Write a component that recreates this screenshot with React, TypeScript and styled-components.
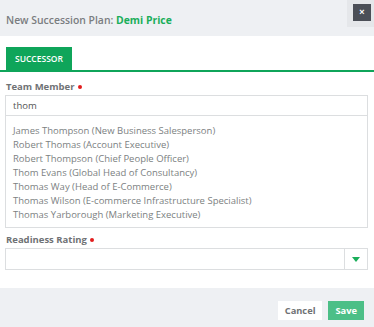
import React, {useState} from "react";
import styled, {createGlobalStyle} from "styled-components";

const GlobalStyle = createGlobalStyle`
    html, body {
        margin: 0;
        padding: 0;
        background: #fff;
        font-family: "Open Sans", "Liberation Sans", sans-serif;
    }
    * {
        box-sizing: border-box;
    }
`;

const Modal = styled.div`
    width: 374px;
    height: 327px;
    display: flex;
    flex-direction: column;
    background: #fff;
`;

const Header = styled.header`
    height: 36px;
    background: #eef0f3;
    display: flex;
    align-items: flex-start;
    justify-content: space-between;
    padding-left: 6px;
`;

const Title = styled.h1`
    margin: 13px 0 0;
    font-size: 10.4px;
    font-weight: 600;
    color: #7a7d80;
    line-height: 14px;
`;

const Highlight = styled.span`
    color: #1aae5a;
    font-weight: 700;
`;

const CloseArea = styled.div`
    width: 27px;
    height: 27px;
    background: #e5e7ea;
    display: flex;
    align-items: flex-start;
    justify-content: flex-start;
    padding: 4px 0 0 6px;
`;

const CloseButton = styled.button`
    width: 18px;
    height: 17px;
    border: none;
    padding: 0;
    background: #4b4f57;
    color: #fff;
    font-size: 9px;
    font-weight: 700;
    line-height: 17px;
    cursor: pointer;
`;

const Body = styled.main`
    flex: 1;
    padding-top: 11px;
`;

const Tabs = styled.div`
    display: flex;
    padding-left: 6px;
    border-bottom: 2px solid #0fa55a;
`;

const Tab = styled.div`
    width: 66px;
    height: 23px;
    background: #0fa55a;
    color: #fff;
    font-size: 8.5px;
    font-weight: 600;
    display: flex;
    align-items: center;
    justify-content: center;
`;

const Form = styled.div`
    padding: 8px 6px 0 5px;
    display: flex;
    flex-direction: column;
`;

const Label = styled.label`
    font-size: 9.5px;
    font-weight: 700;
    color: #6f7275;
    line-height: 13px;
    margin-left: 1px;
    margin-bottom: 2px;
    display: flex;
    align-items: center;
    gap: 3px;
`;

const Required = styled.span`
    width: 4px;
    height: 4px;
    border-radius: 50%;
    background: #e21d1d;
    margin-top: 1px;
`;

const Input = styled.input`
    height: 21px;
    width: 100%;
    border: 1px solid #dcdee0;
    padding: 0 7px;
    font-family: inherit;
    font-size: 9.5px;
    color: #555;
    outline: none;
`;

const Suggestions = styled.ul`
    list-style: none;
    margin: 0 0 5px;
    padding: 8px 7px 5px;
    border: 1px solid #dcdee0;
    border-top: none;
`;

const Suggestion = styled.li`
    font-size: 9.5px;
    line-height: 14px;
    color: #7c7f82;
    cursor: pointer;
`;

const Select = styled.div`
    height: 22px;
    display: flex;
    border: 1px solid #dcdee0;
`;

const SelectValue = styled.div`
    flex: 1;
`;

const SelectArrow = styled.div`
    width: 23px;
    border-left: 1px solid #dcdee0;
    display: flex;
    align-items: center;
    justify-content: center;
`;

const Footer = styled.footer`
    height: 39px;
    background: #eef0f3;
    display: flex;
    justify-content: flex-end;
    align-items: flex-start;
    gap: 6px;
    padding: 13px 10px 0 0;
`;

const Button = styled.button<{ $primary?: boolean }>`
    height: 19px;
    padding: 0 7px;
    border: none;
    font-family: inherit;
    font-size: 9.3px;
    font-weight: 700;
    background: ${p => (p.$primary ? "#4cbf87" : "#fff")};
    color: ${p => (p.$primary ? "#fff" : "#6f7275")};
    cursor: pointer;
`;

const people = [
    "James Thompson (New Business Salesperson)",
    "Robert Thomas (Account Executive)",
    "Robert Thompson (Chief People Officer)",
    "Thom Evans (Global Head of Consultancy)",
    "Thomas Way (Head of E-Commerce)",
    "Thomas Wilson (E-commerce Infrastructure Specialist)",
    "Thomas Yarborough (Marketing Executive)",
];

const App: React.FC = () => {
    const [query, setQuery] = useState("thom");

    return (
        <Modal>
            <GlobalStyle/>
            <Header>
                <Title>
                    New Succession Plan: <Highlight>Demi Price</Highlight>
                </Title>
                <CloseArea>
                    <CloseButton>×</CloseButton>
                </CloseArea>
            </Header>
            <Body>
                <Tabs>
                    <Tab>SUCCESSOR</Tab>
                </Tabs>
                <Form>
                    <Label>Team Member <Required/></Label>
                    <Input value={query} onChange={e => setQuery(e.target.value)}/>
                    <Suggestions>
                        {people.map(p => (
                            <Suggestion key={p}>{p}</Suggestion>
                        ))}
                    </Suggestions>
                    <Label>Readiness Rating <Required/></Label>
                    <Select>
                        <SelectValue/>
                        <SelectArrow>
                            <svg width="8" height="5" viewBox="0 0 8 5">
                                <path d="M0 0 H8 L4 5 Z" fill="#1aae5a"/>
                            </svg>
                        </SelectArrow>
                    </Select>
                </Form>
            </Body>
            <Footer>
                <Button>Cancel</Button>
                <Button $primary>Save</Button>
            </Footer>
        </Modal>
    );
};

export default App;
